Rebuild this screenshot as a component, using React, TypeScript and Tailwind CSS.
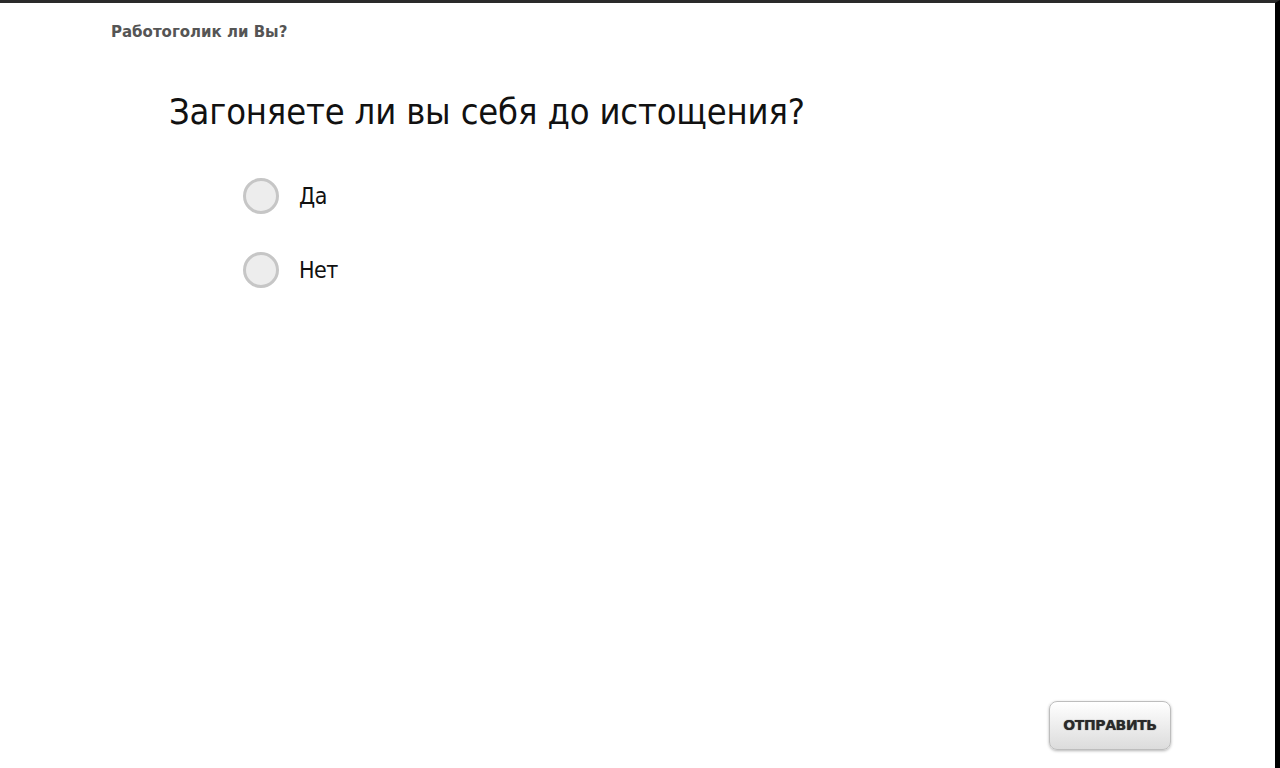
import React from 'react';

const options = ['Да', 'Нет'];

export default function App() {
  return (
    <div className="h-[768px] w-[1280px] overflow-hidden bg-white border-t-[3px] border-t-[#2a2a2a] border-r-[5px] border-r-black flex flex-col font-['Liberation_Sans',sans-serif]">
      <div className="pl-[111px] pt-[19px] text-[15px] leading-[20px] font-bold text-[#555] font-['DejaVu_Sans',sans-serif]">Работоголик ли Вы?</div>
      <h1 className="pl-[169px] mt-[48px] text-[36px] leading-[44px] text-[#111] font-['DejaVu_Sans_Condensed','DejaVu_Sans',sans-serif] tracking-[-0.15px]">
        Загоняете ли вы себя до истощения?
      </h1>
      <div className="pl-[243px] mt-[44px] flex flex-col gap-[38px]">
        {options.map((o) => (
          <label key={o} className="flex items-center gap-[20px]">
            <span className="w-[36px] h-[36px] rounded-full border-[3px] border-[#c6c6c6] bg-[#ededed]" />
            <span className="text-[23px] text-[#111] font-['DejaVu_Sans_Condensed','DejaVu_Sans',sans-serif] tracking-[-0.5px]">{o}</span>
          </label>
        ))}
      </div>
      <div className="flex-1" />
      <div className="flex justify-end pr-[104px] pb-[18px]">
        <button className="w-[122px] h-[49px] rounded-[8px] border border-[#bdbdbd] bg-gradient-to-b from-white to-[#dcdcdc] shadow-[0_1px_3px_rgba(0,0,0,0.3)] text-[14px] font-bold text-[#2a2a2a] font-['DejaVu_Sans',sans-serif] tracking-[-0.4px] [text-shadow:0_0_1px_#555]">
          ОТПРАВИТЬ
        </button>
      </div>
    </div>
  );
}
